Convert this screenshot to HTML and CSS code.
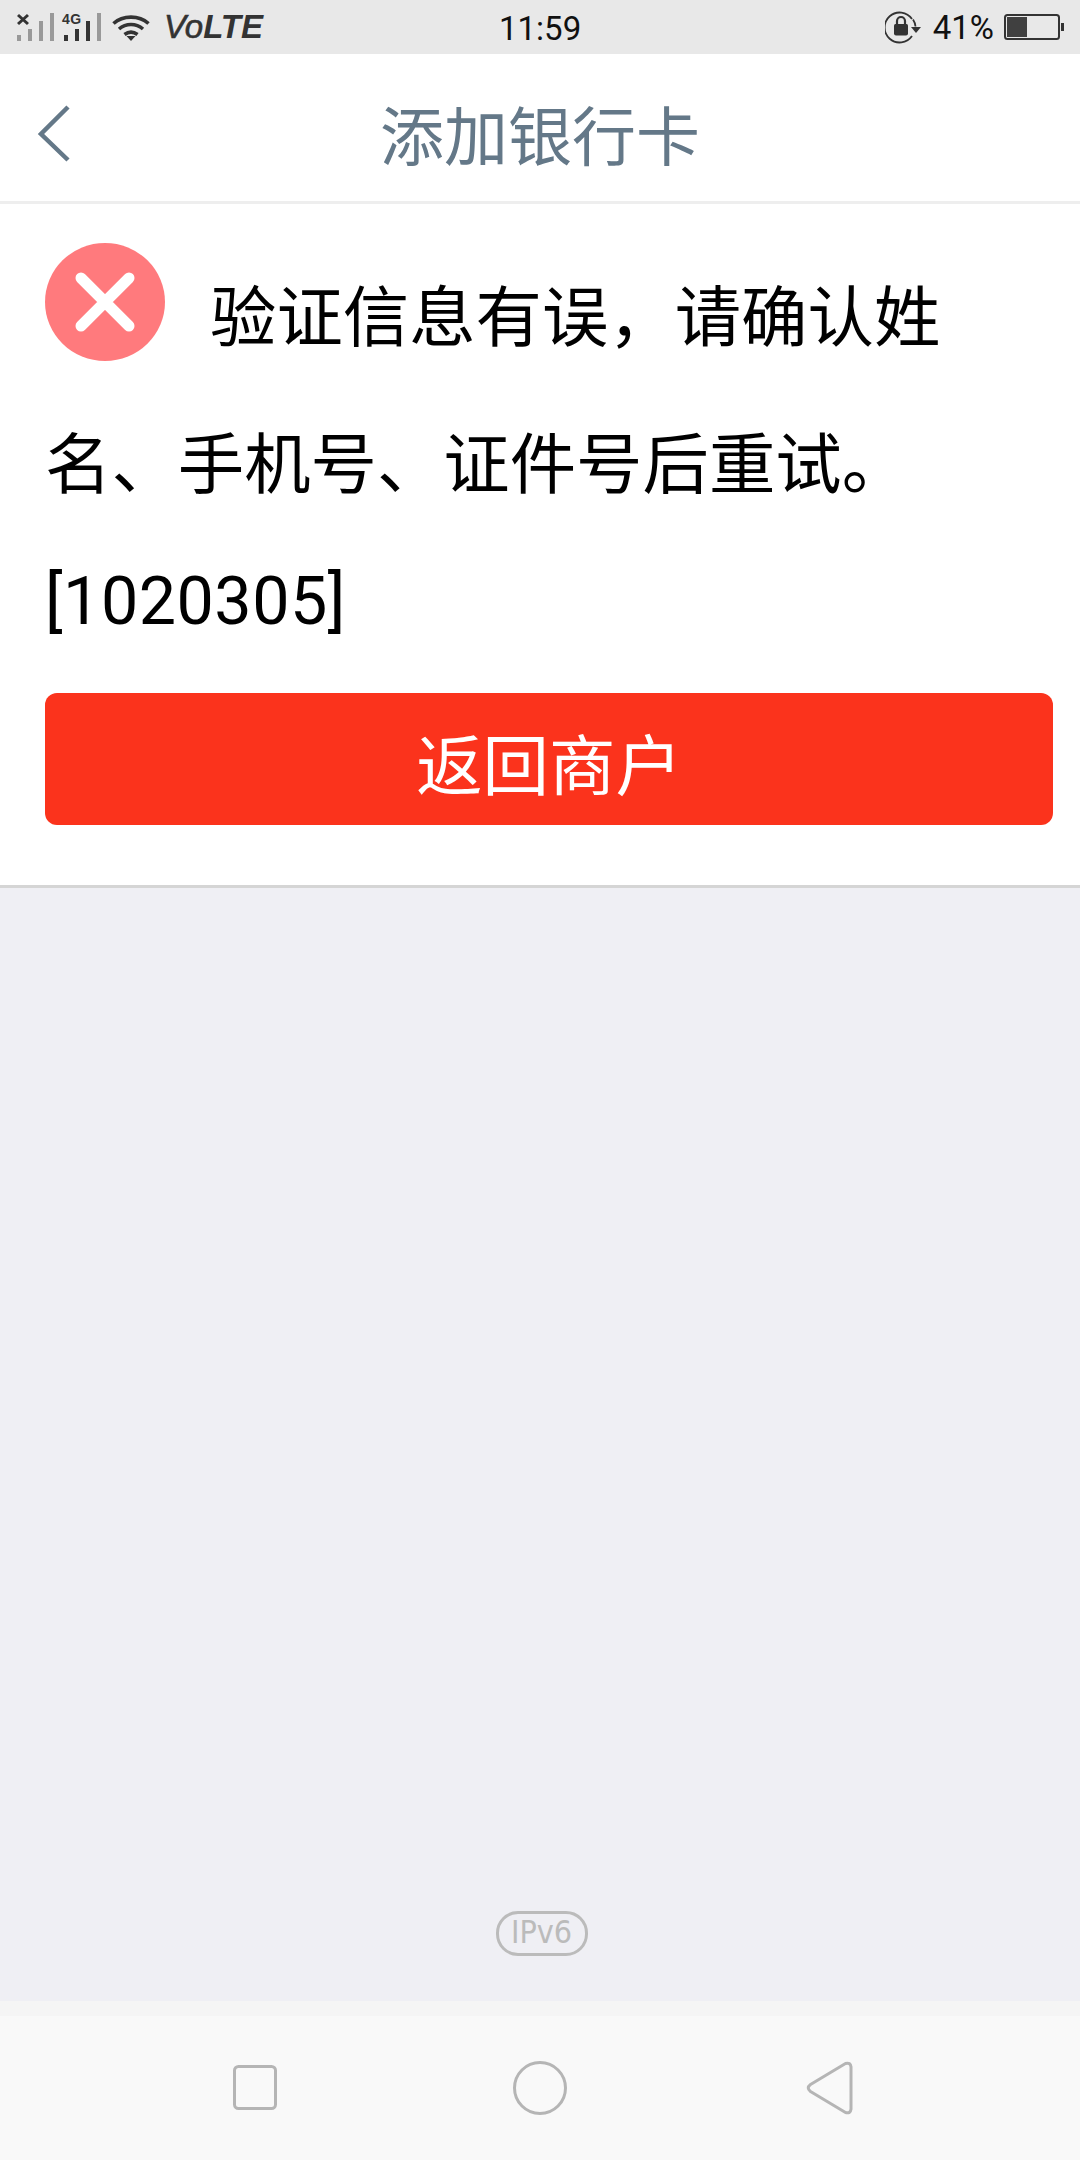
FILE: index.html
```html
<!DOCTYPE html>
<html lang="zh">
<head>
<meta charset="utf-8">
<title>添加银行卡</title>
<link rel="stylesheet" href="styles.css">
</head>
<body>
<div class="status">
  <svg class="sig" viewBox="0 0 37 28" width="37" height="28">
    <path d="M1 2l10 9M11 2L1 11" stroke="#333" stroke-width="3" fill="none"/>
    <rect x="0" y="22" width="4" height="6" fill="#999"/>
    <rect x="11" y="16" width="4" height="12" fill="#999"/>
    <rect x="22" y="8" width="4" height="20" fill="#999"/>
    <rect x="33" y="0" width="4" height="28" fill="#999"/>
  </svg>
  <div class="sig2">
    <span class="g4">4G</span>
    <svg viewBox="0 0 37 28" width="37" height="28">
      <rect x="0" y="22" width="4" height="6" fill="#333"/>
      <rect x="11" y="16" width="4" height="12" fill="#333"/>
      <rect x="22" y="8" width="4" height="20" fill="#333"/>
      <rect x="33" y="0" width="4" height="28" fill="#999"/>
    </svg>
  </div>
  <svg class="wifi" viewBox="0 0 38 27" width="38" height="27">
    <path d="M1.500 9.500C11 1 27 1 36.500 9.500M7 15c7-6 17-6 24 0M12.500 20.500c4-3 9-3 13 0" stroke="#333" stroke-width="3.600" fill="none"/>
    <path d="M14.500 22h9l-4.500 5z" fill="#333"/>
  </svg>
  <span class="volte"><span class="vo">Vo</span>LTE</span>
  <span class="time">11:59</span>
  <svg class="rot" viewBox="0 0 36 34" width="36" height="34">
    <path d="M27 9A15 15 0 1 0 27 26" stroke="#333" stroke-width="1.800" fill="none"/>
    <path d="M28 9.500a15 15 0 0 1 2.500 7" stroke="#333" stroke-width="1.800" fill="none"/>
    <path d="M26 17h10l-5 6z" fill="#333"/>
    <path d="M10.500 14h11a1.500 1.500 0 0 1 1.500 1.500v8a2 2 0 0 1-2 2h-10a2 2 0 0 1-2-2v-8a1.500 1.500 0 0 1 1.500-1.500z" fill="#333"/>
    <path d="M12 15v-4a4 4 0 0 1 8 0v4" stroke="#333" stroke-width="2.200" fill="none"/>
  </svg>
  <span class="pct">41%</span>
  <svg class="batt" viewBox="0 0 60 26" width="60" height="26">
    <rect x="1" y="1" width="54" height="24" rx="2.500" stroke="#333" stroke-width="2" fill="none"/>
    <rect x="3" y="3" width="20" height="20" fill="#404040"/>
    <rect x="57" y="9" width="3" height="8" fill="#333"/>
  </svg>
</div>

<header class="head">
  <svg class="back" viewBox="0 0 34 60" width="34" height="60">
    <path d="M31 3L4 30l27 26" stroke="#647888" stroke-width="4.500" fill="none"/>
  </svg>
  <h1 class="title">添加银行卡</h1>
</header>

<section class="card">
  <p class="msg"><svg class="err" viewBox="0 0 120 118" width="120" height="118"><ellipse cx="60" cy="59" rx="60" ry="59" fill="#ff7a7d"/><path d="M36 35l48 48M84 35L36 83" stroke="#fff" stroke-width="11" stroke-linecap="round"/></svg>验证信息有误，请确认姓名、手机号、证件号后重试。<span class="code">[1020305]</span></p>
  <button class="btn" type="button">返回商户</button>
</section>

<main class="rest">
  <span class="ipv6">IPv6</span>
</main>

<nav class="nav">
  <svg viewBox="0 0 60 60" width="60" height="60"><rect x="9.500" y="8.500" width="41" height="42" rx="4" stroke="#b5b5b5" stroke-width="3" fill="none"/></svg>
  <svg viewBox="0 0 60 60" width="60" height="60"><ellipse cx="30" cy="30" rx="25.500" ry="25.500" stroke="#b5b5b5" stroke-width="3" fill="none"/></svg>
  <svg class="tri" viewBox="0 0 60 60" width="60" height="60"><path d="M10.500 26.500L45.500 5.500Q50.500 4 51 9V51Q50.500 56 45.500 54.500L10.500 33.500Q6 30 10.500 26.500z" stroke="#b5b5b5" stroke-width="3" fill="none" stroke-linejoin="round"/></svg>
</nav>
</body>
</html>
```
FILE: styles.css
```css
* { box-sizing: border-box; }
html, body { margin: 0; padding: 0; }
body {
  width: 1080px;
  height: 2160px;
  display: flex;
  flex-direction: column;
  font-family: Roboto, "Noto Sans CJK SC", sans-serif;
  background: #efeff4;
  color: #000;
}
.status {
  height: 54px;
  flex: none;
  background: #e8e8e8;
  display: flex;
  align-items: center;
  padding-left: 17px;
  position: relative;
}
.sig { display: block; flex: none; }
.sig2 { position: relative; margin-left: 10px; width: 37px; height: 28px; flex: none; }
.sig2 svg { display: block; }
.g4 {
  position: absolute;
  left: -2px;
  top: -1px;
  font: bold 14px/14px "Liberation Sans", sans-serif;
  letter-spacing: 0.5px;
  color: #333;
}
.wifi { margin-left: 11px; flex: none; }
.volte {
  margin-left: 14px;
  font: italic bold 33px/40px "Liberation Sans", sans-serif;
  color: #333;
  width: 100px;
  white-space: nowrap;
}
.vo { font-weight: normal; -webkit-text-stroke: 0.6px #333; }
.time {
  margin-left: 235px;
  padding-top: 2px;
  font-size: 33px;
  color: #111;
  width: 82px;
}
.rot { margin-left: auto; flex: none; }
.pct { margin-left: 12px; font-size: 33px; color: #111; }
.batt { margin-left: 10px; margin-right: 16px; flex: none; }
.head {
  height: 150px;
  flex: none;
  background: #fff;
  border-bottom: 3px solid #eee;
  display: flex;
  align-items: center;
  justify-content: center;
  padding-top: 22px;
  position: relative;
}
.back { position: absolute; left: 37px; top: 50px; }
.title {
  margin: 0;
  font-size: 64px;
  font-weight: 400;
  color: #647888;
  line-height: 1;
}
.card {
  flex: none;
  height: 684px;
  background: #fff;
  border-bottom: 3px solid #d5d5d5;
  padding: 39px 27px 0 45px;
}
.msg {
  margin: 0;
  width: 940px;
  font-size: 66.4px;
  line-height: 132px;
}
.err { vertical-align: -58px; margin-right: 45px; margin-bottom: 38px; }
.code { display: inline-block; margin-top: 4px; letter-spacing: 0.5px; }
.btn {
  display: block;
  width: 1008px;
  height: 132px;
  margin-top: 26px;
  border: 0;
  border-radius: 12px;
  background: #fb331c;
  color: #fff;
  font-family: inherit;
  font-size: 66.4px;
  padding: 4px 0 0;
}
.rest {
  flex: 1;
  display: flex;
  align-items: flex-end;
  justify-content: center;
  padding-bottom: 45px;
}
.ipv6 {
  width: 92px;
  height: 45px;
  margin-left: 3px;
  border: 3px solid #bbb;
  border-radius: 22px;
  color: #bbb;
  font-family: "DejaVu Sans", sans-serif;
  font-stretch: condensed;
  font-size: 32px;
  line-height: 37px;
  text-align: center;
}
.nav {
  flex: none;
  height: 159px;
  background: #f9f9f9;
  border-top: 15px solid #f5f5f5;
  display: flex;
  align-items: center;
  padding-left: 225px;
  gap: 225px;
}
.tri { margin-left: 5px; }
```
